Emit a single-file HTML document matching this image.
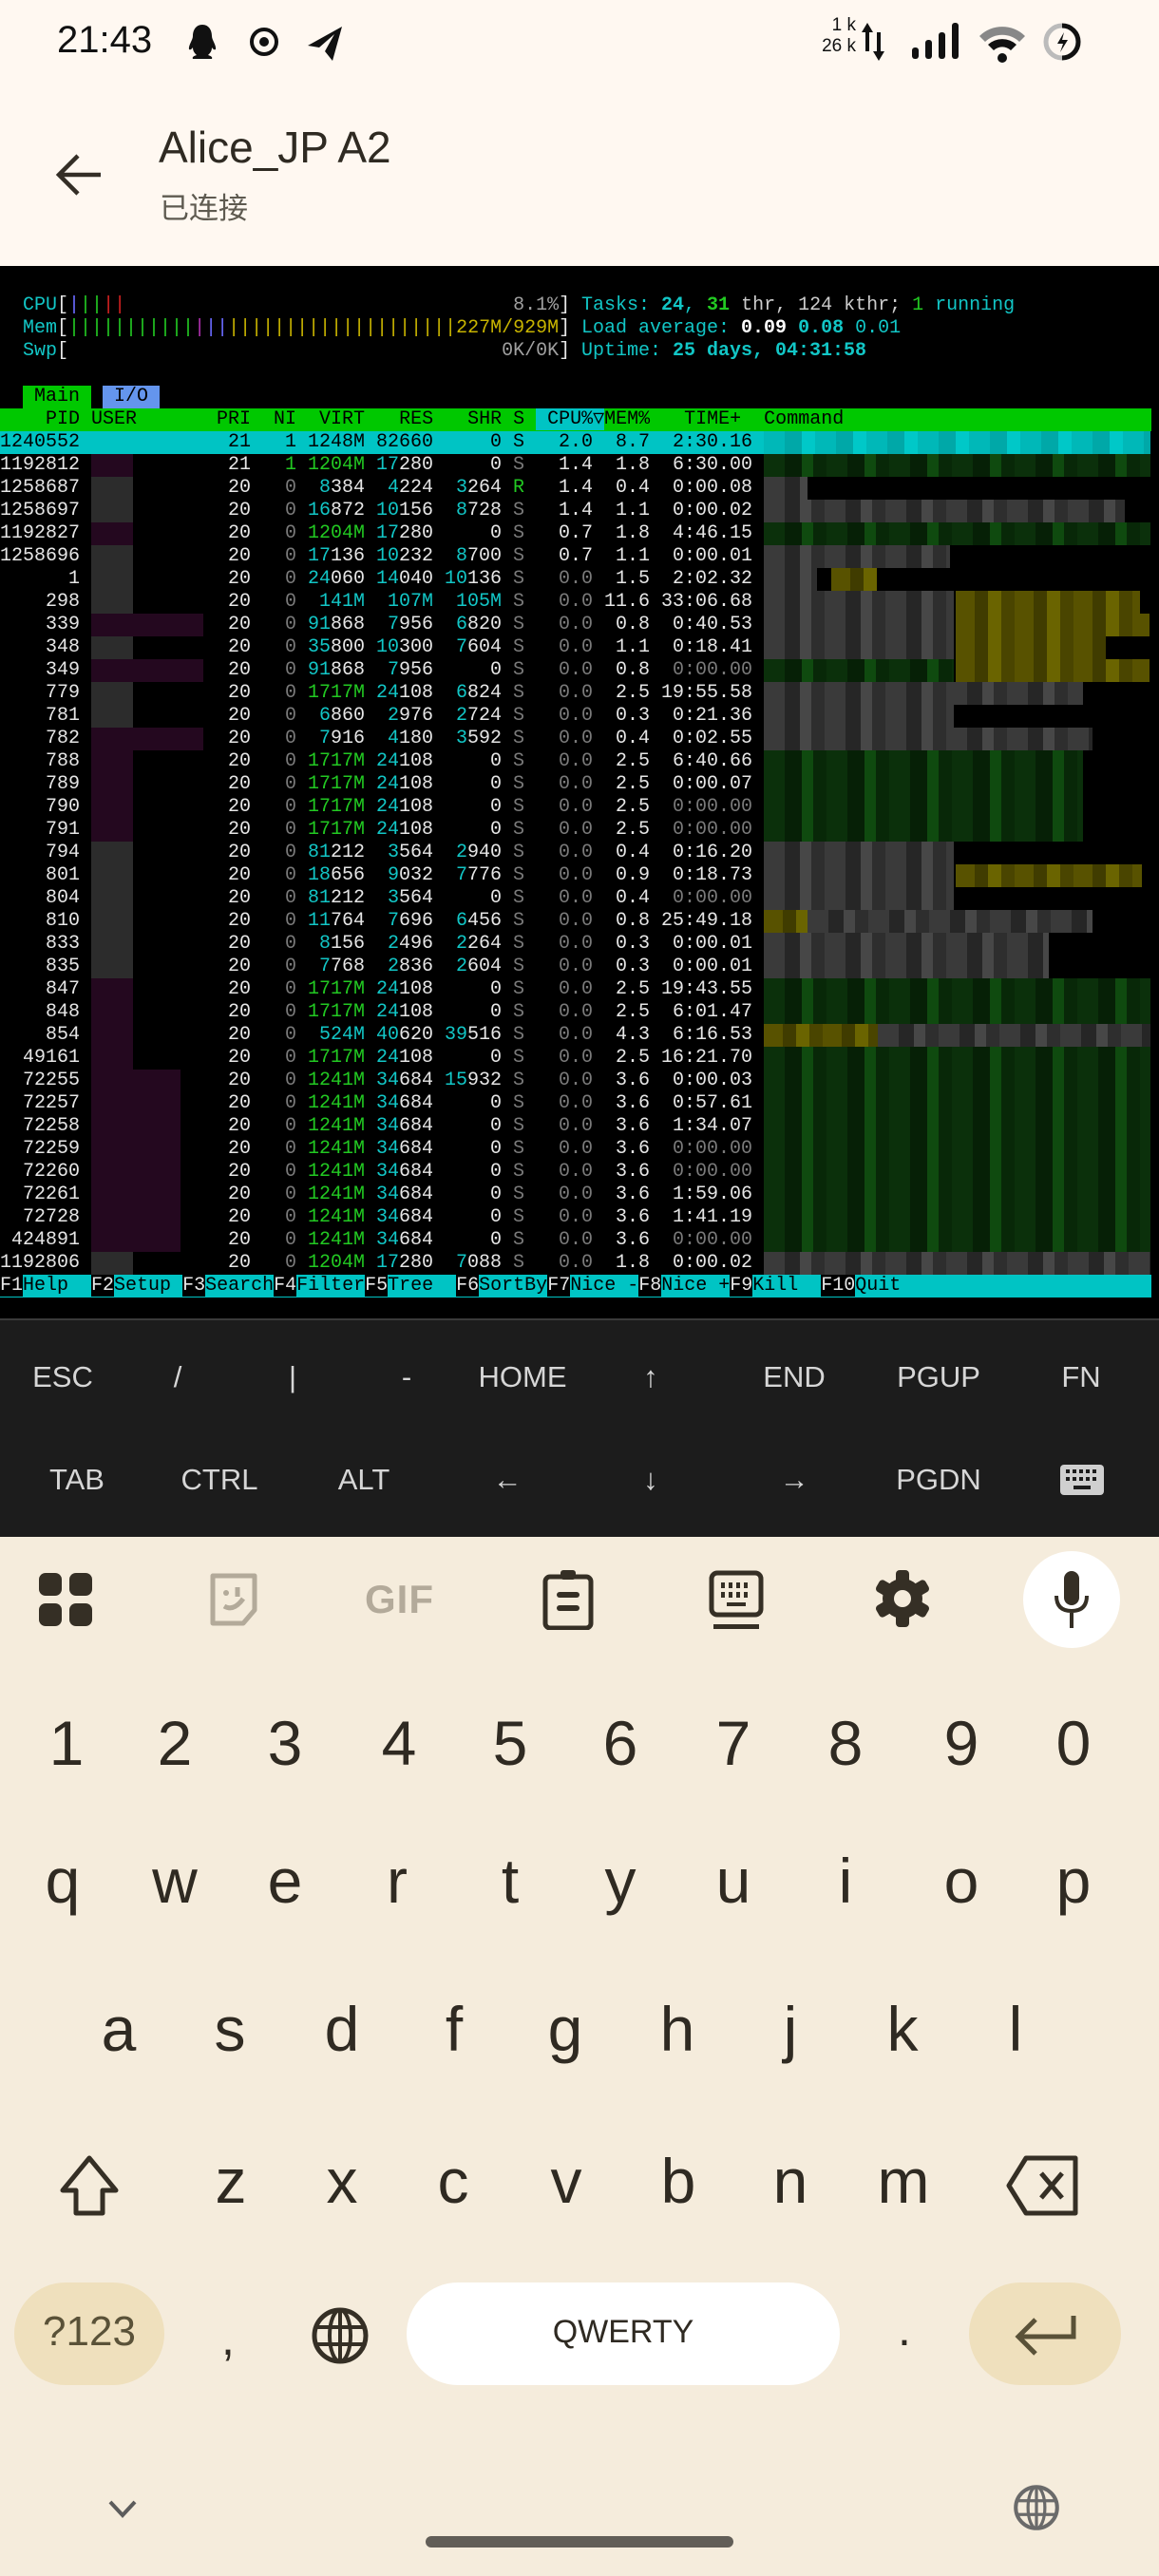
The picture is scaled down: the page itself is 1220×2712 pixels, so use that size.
<!DOCTYPE html>
<html><head><meta charset="utf-8">
<style>
*{margin:0;padding:0;box-sizing:border-box}
body{width:1220px;height:2712px;position:relative;overflow:hidden;background:#fff8f1;font-family:"Liberation Sans","Noto Sans CJK SC",sans-serif}
.abs{position:absolute}
#term{position:absolute;left:0;top:280px;width:1220px;height:1108px;background:#000}
.mono{font-family:"Liberation Mono","DejaVu Sans Mono",monospace;font-size:20px;line-height:24px;white-space:pre;color:#e6e6e6}
.r{position:absolute;left:0;width:1220px;height:24px}
.r i{font-style:normal;position:absolute;top:0;text-align:right}
.p{left:0;width:84px}.pr{left:216px;width:48px}.n{left:264px;width:48px}.v{left:312px;width:72px}.rs{left:384px;width:72px}.sh{left:456px;width:72px}.st{left:528px;width:24px}.cp{left:564px;width:60px}.m{left:624px;width:60px}.t{left:684px;width:108px}
em{font-style:normal;color:#12c6c6}
s{text-decoration:none;color:#7a7a7a}
b{font-weight:normal;color:#22c922}
.hl{background:#00c4c4;color:#000}
.hl em,.hl s,.hl b{color:#000}
.blk{position:absolute;height:24px}
.gy{background:repeating-linear-gradient(90deg,#3a3a3a 0 22px,#262626 22px 38px,#474747 38px 50px,#2e2e2e 50px 64px)}
.gr{background:repeating-linear-gradient(90deg,#0b300b 0 22px,#062006 22px 40px,#0f4a0f 40px 52px,#082808 52px 66px)}
.yl{background:repeating-linear-gradient(90deg,#585200 0 20px,#403c00 20px 34px,#6a6400 34px 48px,#4a4500 48px 62px)}
.cy{background:repeating-linear-gradient(90deg,#00b8b8 0 22px,#00a8a8 22px 40px,#00c8c8 40px 54px)}
.pu{background:#24081f}
.ug{background:#2c2c2c}
.ek{position:absolute;color:#d6d6d6;font-size:31px;transform:translate(-50%,-50%);white-space:nowrap}
.kb{position:absolute;color:#2f2a22;font-size:66px;transform:translate(-50%,-50%);font-weight:300}
</style></head><body>

<!-- status bar -->
<div class="abs" style="left:60px;top:20px;font-size:40px;color:#111">21:43</div>
<svg class="abs" style="left:196px;top:24px" width="34" height="40" viewBox="0 0 34 40"><path d="M17 2c-7 0-10 6-10 12 0 4-5 10-4 14 2 1 3-1 4-2 0 4 2 6 4 8-3 1-5 2-4 4h20c1-2-1-3-4-4 2-2 4-4 4-8 1 1 2 3 4 2 1-4-4-10-4-14 0-6-3-12-10-12z" fill="#111"/></svg>
<svg class="abs" style="left:260px;top:26px" width="36" height="36" viewBox="0 0 36 36"><circle cx="18" cy="18" r="13" fill="none" stroke="#111" stroke-width="4"/><circle cx="18" cy="18" r="5" fill="#111"/></svg>
<svg class="abs" style="left:322px;top:26px" width="42" height="40" viewBox="0 0 42 40"><path d="M2 22L38 2 28 38 20 28 30 10 14 24z" fill="#111"/></svg>
<div class="abs" style="left:857px;top:16px;font-size:19px;color:#111;line-height:22px;text-align:right;width:44px">1 k<br>26 k</div>
<svg class="abs" style="left:905px;top:22px" width="28" height="44" viewBox="0 0 28 44"><path d="M8 2L2 12h4v20h4V12h4z M20 42l6-10h-4V12h-4v20h-4z" fill="#111"/></svg>
<svg class="abs" style="left:958px;top:22px" width="56" height="42" viewBox="0 0 56 42"><rect x="2" y="28" width="7" height="12" rx="3" fill="#111"/><rect x="16" y="20" width="7" height="20" rx="3" fill="#111"/><rect x="30" y="12" width="7" height="28" rx="3" fill="#111"/><rect x="44" y="2" width="7" height="38" rx="3" fill="#111"/></svg>
<svg class="abs" style="left:1028px;top:22px" width="54" height="44" viewBox="0 0 54 44"><path d="M3 16A34 34 0 0 1 51 16L45 22A26 26 0 0 0 9 22z" fill="#888"/><path d="M12 25A22 22 0 0 1 42 25L36 31A13 13 0 0 0 18 31z" fill="#111"/><circle cx="27" cy="39" r="5" fill="#111"/></svg>
<svg class="abs" style="left:1096px;top:22px" width="44" height="44" viewBox="0 0 44 44"><circle cx="22" cy="22" r="17" fill="none" stroke="#bbb" stroke-width="5"/><path d="M22 5A17 17 0 0 1 22 39" fill="none" stroke="#111" stroke-width="5"/><path d="M24 12l-7 12h6l-3 9 8-13h-6z" fill="#111"/></svg>

<!-- app bar -->
<svg class="abs" style="left:56px;top:160px" width="54" height="48" viewBox="0 0 54 48"><path d="M26 4L6 24l20 20M6 24h44" fill="none" stroke="#342e26" stroke-width="4.5"/></svg>
<div class="abs" style="left:167px;top:128px;font-size:46px;color:#2f2a22">Alice_JP A2</div>
<div class="abs" style="left:168px;top:194px;font-size:31px;color:#5e5a50">已连接</div>

<!-- terminal -->
<div id="term" class="mono">
<div class="r" style="top:30px;left:24px"><span style="color:#12c6c6">CPU</span>[<span style="color:#6a6aff">|</span><b>||</b><span style="color:#d02020">||</span>                                  <s style="color:#a0a0a0">8.1%</s>]</div>
<div class="r" style="top:54px;left:24px"><span style="color:#12c6c6">Mem</span>[<b>|||||||||||</b><span style="color:#b030b0">|</span><span style="color:#6a6aff">||</span><span style="color:#c8b400">||||||||||||||||||||227M/929M</span>]</div>
<div class="r" style="top:78px;left:24px"><span style="color:#12c6c6">Swp</span>[                                      <s style="color:#a0a0a0">0K/0K</s>]</div>
<div class="r" style="top:30px;left:612px"><span style="color:#12c6c6">Tasks: <span style="font-weight:bold">24</span>, </span><b style="font-weight:bold">31</b><span style="color:#ccc"> thr, 124 kthr; </span><b>1</b><span style="color:#12c6c6"> running</span></div>
<div class="r" style="top:54px;left:612px"><span style="color:#12c6c6">Load average: </span><span style="font-weight:bold;color:#fff">0.09</span> <span style="font-weight:bold;color:#12c6c6">0.08</span> <span style="color:#12c6c6">0.01</span></div>
<div class="r" style="top:78px;left:612px"><span style="color:#12c6c6">Uptime: <span style="font-weight:bold">25 days, 04:31:58</span></span></div>
<div class="r" style="top:126px;left:24px;width:72px;background:#00c800;color:#000;padding-left:12px">Main</div>
<div class="r" style="top:126px;left:108px;width:60px;background:#6495ed;color:#000;padding-left:12px">I/O</div>
<div class="r" style="top:150px;width:1212px;background:#00c800;color:#000">    PID USER       PRI  NI  VIRT   RES   SHR S <span style="background:#00c4c4"> CPU%▽</span>MEM%   TIME+  Command</div>

<!-- user/command blocks -->
<div class="blk cy" style="top:174px;left:96px;width:130px;background:#00b4b4"></div><div class="blk cy" style="top:174px;left:804px;width:407px"></div>
<div class="blk pu" style="top:198px;left:96px;width:44px"></div><div class="blk gr" style="top:198px;left:804px;width:407px"></div>
<div class="blk ug" style="top:222px;left:96px;width:44px"></div><div class="blk gy" style="top:222px;left:804px;width:46px"></div>
<div class="blk ug" style="top:246px;left:96px;width:44px"></div><div class="blk gy" style="top:246px;left:804px;width:380px"></div>
<div class="blk pu" style="top:270px;left:96px;width:44px"></div><div class="blk gr" style="top:270px;left:804px;width:407px"></div>
<div class="blk ug" style="top:294px;left:96px;width:44px"></div><div class="blk gy" style="top:294px;left:804px;width:196px"></div>
<div class="blk ug" style="top:318px;left:96px;width:44px"></div><div class="blk gy" style="top:318px;left:804px;width:56px"></div><div class="blk yl" style="top:318px;left:875px;width:48px"></div>
<div class="blk ug" style="top:342px;left:96px;width:44px"></div><div class="blk gy" style="top:342px;left:804px;width:200px"></div><div class="blk yl" style="top:342px;left:1006px;width:194px"></div>
<div class="blk pu" style="top:366px;left:96px;width:118px"></div><div class="blk gy" style="top:366px;left:804px;width:200px"></div><div class="blk yl" style="top:366px;left:1006px;width:204px"></div>
<div class="blk ug" style="top:390px;left:96px;width:44px"></div><div class="blk gy" style="top:390px;left:804px;width:200px"></div><div class="blk yl" style="top:390px;left:1006px;width:158px"></div>
<div class="blk pu" style="top:414px;left:96px;width:118px"></div><div class="blk gr" style="top:414px;left:804px;width:200px"></div><div class="blk yl" style="top:414px;left:1006px;width:204px"></div>
<div class="blk ug" style="top:438px;left:96px;width:44px"></div><div class="blk gy" style="top:438px;left:804px;width:336px"></div>
<div class="blk ug" style="top:462px;left:96px;width:44px"></div><div class="blk gy" style="top:462px;left:804px;width:200px"></div>
<div class="blk pu" style="top:486px;left:96px;width:118px"></div><div class="blk gy" style="top:486px;left:804px;width:346px"></div>
<div class="blk pu" style="top:510px;left:96px;width:44px;height:96px"></div><div class="blk gr" style="top:510px;left:804px;width:336px;height:96px"></div>
<div class="blk ug" style="top:606px;left:96px;width:44px"></div><div class="blk gy" style="top:606px;left:804px;width:200px"></div>
<div class="blk ug" style="top:630px;left:96px;width:44px"></div><div class="blk gy" style="top:630px;left:804px;width:200px"></div><div class="blk yl" style="top:630px;left:1006px;width:196px"></div>
<div class="blk ug" style="top:654px;left:96px;width:44px"></div><div class="blk gy" style="top:654px;left:804px;width:200px"></div>
<div class="blk ug" style="top:678px;left:96px;width:44px"></div><div class="blk yl" style="top:678px;left:804px;width:46px"></div><div class="blk gy" style="top:678px;left:850px;width:300px"></div>
<div class="blk ug" style="top:702px;left:96px;width:44px;height:48px"></div><div class="blk gy" style="top:702px;left:804px;width:300px;height:48px"></div>
<div class="blk pu" style="top:750px;left:96px;width:44px;height:96px"></div><div class="blk gr" style="top:750px;left:804px;width:407px;height:48px"></div>
<div class="blk yl" style="top:798px;left:804px;width:120px"></div><div class="blk gy" style="top:798px;left:924px;width:287px"></div>
<div class="blk gr" style="top:822px;left:804px;width:407px"></div>
<div class="blk pu" style="top:846px;left:96px;width:94px;height:192px"></div><div class="blk gr" style="top:846px;left:804px;width:407px;height:192px"></div>
<div class="blk ug" style="top:1038px;left:96px;width:44px"></div><div class="blk gy" style="top:1038px;left:804px;width:407px"></div>

<!-- process rows -->
<div class="r hl" style="top:174px;width:804px"><i class="p">1240552</i><i class="pr">21</i><i class="n">1</i><i class="v">1248M</i><i class="rs">82660</i><i class="sh">0</i><i class="st">S</i><i class="cp">2.0</i><i class="m">8.7</i><i class="t">2:30.16</i></div>
<div class="r" style="top:198px"><i class="p">1192812</i><i class="pr">21</i><i class="n"><b>1</b></i><i class="v"><b>1204M</b></i><i class="rs"><em>17</em>280</i><i class="sh">0</i><i class="st"><s>S</s></i><i class="cp">1.4</i><i class="m">1.8</i><i class="t">6:30.00</i></div>
<div class="r" style="top:222px"><i class="p">1258687</i><i class="pr">20</i><i class="n"><s>0</s></i><i class="v"><em>8</em>384</i><i class="rs"><em>4</em>224</i><i class="sh"><em>3</em>264</i><i class="st"><b>R</b></i><i class="cp">1.4</i><i class="m">0.4</i><i class="t">0:00.08</i></div>
<div class="r" style="top:246px"><i class="p">1258697</i><i class="pr">20</i><i class="n"><s>0</s></i><i class="v"><em>16</em>872</i><i class="rs"><em>10</em>156</i><i class="sh"><em>8</em>728</i><i class="st"><s>S</s></i><i class="cp">1.4</i><i class="m">1.1</i><i class="t">0:00.02</i></div>
<div class="r" style="top:270px"><i class="p">1192827</i><i class="pr">20</i><i class="n"><s>0</s></i><i class="v"><b>1204M</b></i><i class="rs"><em>17</em>280</i><i class="sh">0</i><i class="st"><s>S</s></i><i class="cp">0.7</i><i class="m">1.8</i><i class="t">4:46.15</i></div>
<div class="r" style="top:294px"><i class="p">1258696</i><i class="pr">20</i><i class="n"><s>0</s></i><i class="v"><em>17</em>136</i><i class="rs"><em>10</em>232</i><i class="sh"><em>8</em>700</i><i class="st"><s>S</s></i><i class="cp">0.7</i><i class="m">1.1</i><i class="t">0:00.01</i></div>
<div class="r" style="top:318px"><i class="p">1</i><i class="pr">20</i><i class="n"><s>0</s></i><i class="v"><em>24</em>060</i><i class="rs"><em>14</em>040</i><i class="sh"><em>10</em>136</i><i class="st"><s>S</s></i><i class="cp"><s>0.0</s></i><i class="m">1.5</i><i class="t">2:02.32</i></div>
<div class="r" style="top:342px"><i class="p">298</i><i class="pr">20</i><i class="n"><s>0</s></i><i class="v"><em>141M</em></i><i class="rs"><em>107M</em></i><i class="sh"><em>105M</em></i><i class="st"><s>S</s></i><i class="cp"><s>0.0</s></i><i class="m">11.6</i><i class="t">33:06.68</i></div>
<div class="r" style="top:366px"><i class="p">339</i><i class="pr">20</i><i class="n"><s>0</s></i><i class="v"><em>91</em>868</i><i class="rs"><em>7</em>956</i><i class="sh"><em>6</em>820</i><i class="st"><s>S</s></i><i class="cp"><s>0.0</s></i><i class="m">0.8</i><i class="t">0:40.53</i></div>
<div class="r" style="top:390px"><i class="p">348</i><i class="pr">20</i><i class="n"><s>0</s></i><i class="v"><em>35</em>800</i><i class="rs"><em>10</em>300</i><i class="sh"><em>7</em>604</i><i class="st"><s>S</s></i><i class="cp"><s>0.0</s></i><i class="m">1.1</i><i class="t">0:18.41</i></div>
<div class="r" style="top:414px"><i class="p">349</i><i class="pr">20</i><i class="n"><s>0</s></i><i class="v"><em>91</em>868</i><i class="rs"><em>7</em>956</i><i class="sh">0</i><i class="st"><s>S</s></i><i class="cp"><s>0.0</s></i><i class="m">0.8</i><i class="t"><s>0:00.00</s></i></div>
<div class="r" style="top:438px"><i class="p">779</i><i class="pr">20</i><i class="n"><s>0</s></i><i class="v"><b>1717M</b></i><i class="rs"><em>24</em>108</i><i class="sh"><em>6</em>824</i><i class="st"><s>S</s></i><i class="cp"><s>0.0</s></i><i class="m">2.5</i><i class="t">19:55.58</i></div>
<div class="r" style="top:462px"><i class="p">781</i><i class="pr">20</i><i class="n"><s>0</s></i><i class="v"><em>6</em>860</i><i class="rs"><em>2</em>976</i><i class="sh"><em>2</em>724</i><i class="st"><s>S</s></i><i class="cp"><s>0.0</s></i><i class="m">0.3</i><i class="t">0:21.36</i></div>
<div class="r" style="top:486px"><i class="p">782</i><i class="pr">20</i><i class="n"><s>0</s></i><i class="v"><em>7</em>916</i><i class="rs"><em>4</em>180</i><i class="sh"><em>3</em>592</i><i class="st"><s>S</s></i><i class="cp"><s>0.0</s></i><i class="m">0.4</i><i class="t">0:02.55</i></div>
<div class="r" style="top:510px"><i class="p">788</i><i class="pr">20</i><i class="n"><s>0</s></i><i class="v"><b>1717M</b></i><i class="rs"><em>24</em>108</i><i class="sh">0</i><i class="st"><s>S</s></i><i class="cp"><s>0.0</s></i><i class="m">2.5</i><i class="t">6:40.66</i></div>
<div class="r" style="top:534px"><i class="p">789</i><i class="pr">20</i><i class="n"><s>0</s></i><i class="v"><b>1717M</b></i><i class="rs"><em>24</em>108</i><i class="sh">0</i><i class="st"><s>S</s></i><i class="cp"><s>0.0</s></i><i class="m">2.5</i><i class="t">0:00.07</i></div>
<div class="r" style="top:558px"><i class="p">790</i><i class="pr">20</i><i class="n"><s>0</s></i><i class="v"><b>1717M</b></i><i class="rs"><em>24</em>108</i><i class="sh">0</i><i class="st"><s>S</s></i><i class="cp"><s>0.0</s></i><i class="m">2.5</i><i class="t"><s>0:00.00</s></i></div>
<div class="r" style="top:582px"><i class="p">791</i><i class="pr">20</i><i class="n"><s>0</s></i><i class="v"><b>1717M</b></i><i class="rs"><em>24</em>108</i><i class="sh">0</i><i class="st"><s>S</s></i><i class="cp"><s>0.0</s></i><i class="m">2.5</i><i class="t"><s>0:00.00</s></i></div>
<div class="r" style="top:606px"><i class="p">794</i><i class="pr">20</i><i class="n"><s>0</s></i><i class="v"><em>81</em>212</i><i class="rs"><em>3</em>564</i><i class="sh"><em>2</em>940</i><i class="st"><s>S</s></i><i class="cp"><s>0.0</s></i><i class="m">0.4</i><i class="t">0:16.20</i></div>
<div class="r" style="top:630px"><i class="p">801</i><i class="pr">20</i><i class="n"><s>0</s></i><i class="v"><em>18</em>656</i><i class="rs"><em>9</em>032</i><i class="sh"><em>7</em>776</i><i class="st"><s>S</s></i><i class="cp"><s>0.0</s></i><i class="m">0.9</i><i class="t">0:18.73</i></div>
<div class="r" style="top:654px"><i class="p">804</i><i class="pr">20</i><i class="n"><s>0</s></i><i class="v"><em>81</em>212</i><i class="rs"><em>3</em>564</i><i class="sh">0</i><i class="st"><s>S</s></i><i class="cp"><s>0.0</s></i><i class="m">0.4</i><i class="t"><s>0:00.00</s></i></div>
<div class="r" style="top:678px"><i class="p">810</i><i class="pr">20</i><i class="n"><s>0</s></i><i class="v"><em>11</em>764</i><i class="rs"><em>7</em>696</i><i class="sh"><em>6</em>456</i><i class="st"><s>S</s></i><i class="cp"><s>0.0</s></i><i class="m">0.8</i><i class="t">25:49.18</i></div>
<div class="r" style="top:702px"><i class="p">833</i><i class="pr">20</i><i class="n"><s>0</s></i><i class="v"><em>8</em>156</i><i class="rs"><em>2</em>496</i><i class="sh"><em>2</em>264</i><i class="st"><s>S</s></i><i class="cp"><s>0.0</s></i><i class="m">0.3</i><i class="t">0:00.01</i></div>
<div class="r" style="top:726px"><i class="p">835</i><i class="pr">20</i><i class="n"><s>0</s></i><i class="v"><em>7</em>768</i><i class="rs"><em>2</em>836</i><i class="sh"><em>2</em>604</i><i class="st"><s>S</s></i><i class="cp"><s>0.0</s></i><i class="m">0.3</i><i class="t">0:00.01</i></div>
<div class="r" style="top:750px"><i class="p">847</i><i class="pr">20</i><i class="n"><s>0</s></i><i class="v"><b>1717M</b></i><i class="rs"><em>24</em>108</i><i class="sh">0</i><i class="st"><s>S</s></i><i class="cp"><s>0.0</s></i><i class="m">2.5</i><i class="t">19:43.55</i></div>
<div class="r" style="top:774px"><i class="p">848</i><i class="pr">20</i><i class="n"><s>0</s></i><i class="v"><b>1717M</b></i><i class="rs"><em>24</em>108</i><i class="sh">0</i><i class="st"><s>S</s></i><i class="cp"><s>0.0</s></i><i class="m">2.5</i><i class="t">6:01.47</i></div>
<div class="r" style="top:798px"><i class="p">854</i><i class="pr">20</i><i class="n"><s>0</s></i><i class="v"><em>524M</em></i><i class="rs"><em>40</em>620</i><i class="sh"><em>39</em>516</i><i class="st"><s>S</s></i><i class="cp"><s>0.0</s></i><i class="m">4.3</i><i class="t">6:16.53</i></div>
<div class="r" style="top:822px"><i class="p">49161</i><i class="pr">20</i><i class="n"><s>0</s></i><i class="v"><b>1717M</b></i><i class="rs"><em>24</em>108</i><i class="sh">0</i><i class="st"><s>S</s></i><i class="cp"><s>0.0</s></i><i class="m">2.5</i><i class="t">16:21.70</i></div>
<div class="r" style="top:846px"><i class="p">72255</i><i class="pr">20</i><i class="n"><s>0</s></i><i class="v"><b>1241M</b></i><i class="rs"><em>34</em>684</i><i class="sh"><em>15</em>932</i><i class="st"><s>S</s></i><i class="cp"><s>0.0</s></i><i class="m">3.6</i><i class="t">0:00.03</i></div>
<div class="r" style="top:870px"><i class="p">72257</i><i class="pr">20</i><i class="n"><s>0</s></i><i class="v"><b>1241M</b></i><i class="rs"><em>34</em>684</i><i class="sh">0</i><i class="st"><s>S</s></i><i class="cp"><s>0.0</s></i><i class="m">3.6</i><i class="t">0:57.61</i></div>
<div class="r" style="top:894px"><i class="p">72258</i><i class="pr">20</i><i class="n"><s>0</s></i><i class="v"><b>1241M</b></i><i class="rs"><em>34</em>684</i><i class="sh">0</i><i class="st"><s>S</s></i><i class="cp"><s>0.0</s></i><i class="m">3.6</i><i class="t">1:34.07</i></div>
<div class="r" style="top:918px"><i class="p">72259</i><i class="pr">20</i><i class="n"><s>0</s></i><i class="v"><b>1241M</b></i><i class="rs"><em>34</em>684</i><i class="sh">0</i><i class="st"><s>S</s></i><i class="cp"><s>0.0</s></i><i class="m">3.6</i><i class="t"><s>0:00.00</s></i></div>
<div class="r" style="top:942px"><i class="p">72260</i><i class="pr">20</i><i class="n"><s>0</s></i><i class="v"><b>1241M</b></i><i class="rs"><em>34</em>684</i><i class="sh">0</i><i class="st"><s>S</s></i><i class="cp"><s>0.0</s></i><i class="m">3.6</i><i class="t"><s>0:00.00</s></i></div>
<div class="r" style="top:966px"><i class="p">72261</i><i class="pr">20</i><i class="n"><s>0</s></i><i class="v"><b>1241M</b></i><i class="rs"><em>34</em>684</i><i class="sh">0</i><i class="st"><s>S</s></i><i class="cp"><s>0.0</s></i><i class="m">3.6</i><i class="t">1:59.06</i></div>
<div class="r" style="top:990px"><i class="p">72728</i><i class="pr">20</i><i class="n"><s>0</s></i><i class="v"><b>1241M</b></i><i class="rs"><em>34</em>684</i><i class="sh">0</i><i class="st"><s>S</s></i><i class="cp"><s>0.0</s></i><i class="m">3.6</i><i class="t">1:41.19</i></div>
<div class="r" style="top:1014px"><i class="p">424891</i><i class="pr">20</i><i class="n"><s>0</s></i><i class="v"><b>1241M</b></i><i class="rs"><em>34</em>684</i><i class="sh">0</i><i class="st"><s>S</s></i><i class="cp"><s>0.0</s></i><i class="m">3.6</i><i class="t"><s>0:00.00</s></i></div>
<div class="r" style="top:1038px"><i class="p">1192806</i><i class="pr">20</i><i class="n"><s>0</s></i><i class="v"><b>1204M</b></i><i class="rs"><em>17</em>280</i><i class="sh"><em>7</em>088</i><i class="st"><s>S</s></i><i class="cp"><s>0.0</s></i><i class="m">1.8</i><i class="t">0:00.02</i></div>

<!-- F-key bar -->
<div class="r" style="top:1062px;width:1212px;background:#00c4c4"></div>
<div class="r" style="top:1062px;color:#000"><span style="background:#000;color:#e6e6e6">F1</span>Help  <span style="background:#000;color:#e6e6e6">F2</span>Setup <span style="background:#000;color:#e6e6e6">F3</span>Search<span style="background:#000;color:#e6e6e6">F4</span>Filter<span style="background:#000;color:#e6e6e6">F5</span>Tree  <span style="background:#000;color:#e6e6e6">F6</span>SortBy<span style="background:#000;color:#e6e6e6">F7</span>Nice -<span style="background:#000;color:#e6e6e6">F8</span>Nice +<span style="background:#000;color:#e6e6e6">F9</span>Kill  <span style="background:#000;color:#e6e6e6">F10</span>Quit</div>
</div>

<!-- extra keys -->
<div class="abs" style="left:0;top:1388px;width:1220px;height:230px;background:#1c1c1c;border-top:2px solid #3a3a3a"></div>
<div class="ek" style="left:66px;top:1450px">ESC</div>
<div class="ek" style="left:187px;top:1450px">/</div>
<div class="ek" style="left:308px;top:1450px">|</div>
<div class="ek" style="left:428px;top:1450px">-</div>
<div class="ek" style="left:550px;top:1450px">HOME</div>
<div class="ek" style="left:685px;top:1450px">↑</div>
<div class="ek" style="left:836px;top:1450px">END</div>
<div class="ek" style="left:988px;top:1450px">PGUP</div>
<div class="ek" style="left:1138px;top:1450px">FN</div>
<div class="ek" style="left:81px;top:1558px">TAB</div>
<div class="ek" style="left:231px;top:1558px">CTRL</div>
<div class="ek" style="left:383px;top:1558px">ALT</div>
<div class="ek" style="left:534px;top:1558px">←</div>
<div class="ek" style="left:685px;top:1558px">↓</div>
<div class="ek" style="left:836px;top:1558px">→</div>
<div class="ek" style="left:988px;top:1558px">PGDN</div>
<svg class="abs" style="left:1116px;top:1542px" width="46" height="32" viewBox="0 0 46 32"><rect x="0" y="0" width="46" height="32" rx="4" fill="#cfcfcf"/><g fill="#1c1c1c"><rect x="6" y="5" width="4" height="4"/><rect x="13" y="5" width="4" height="4"/><rect x="20" y="5" width="4" height="4"/><rect x="27" y="5" width="4" height="4"/><rect x="34" y="5" width="4" height="4"/><rect x="6" y="13" width="4" height="4"/><rect x="13" y="13" width="4" height="4"/><rect x="20" y="13" width="4" height="4"/><rect x="27" y="13" width="4" height="4"/><rect x="34" y="13" width="4" height="4"/><rect x="14" y="22" width="18" height="4"/></g></svg>

<!-- keyboard -->
<div class="abs" style="left:0;top:1618px;width:1220px;height:1094px;background:#f5ecdc"></div>
<svg class="abs" style="left:40px;top:1655px" width="58" height="58" viewBox="0 0 58 58"><g fill="#352f25"><rect x="1" y="1" width="24" height="24" rx="7"/><rect x="33" y="1" width="24" height="24" rx="7"/><rect x="1" y="33" width="24" height="24" rx="7"/><rect x="33" y="33" width="24" height="24" rx="7"/></g></svg>
<svg class="abs" style="left:218px;top:1655px" width="56" height="58" viewBox="0 0 56 58"><path d="M6 4h44v36L38 54H6z" fill="none" stroke="#b3aa9a" stroke-width="5" stroke-linejoin="round"/><circle cx="20" cy="22" r="3" fill="#b3aa9a"/><path d="M32 16v10M18 36q10 6 20-8" fill="none" stroke="#b3aa9a" stroke-width="5"/></svg>
<div class="abs" style="left:384px;top:1660px;font-size:42px;font-weight:bold;color:#b3aa9a;letter-spacing:1px">GIF</div>
<svg class="abs" style="left:570px;top:1650px" width="56" height="66" viewBox="0 0 56 66"><rect x="4" y="10" width="48" height="54" rx="5" fill="none" stroke="#352f25" stroke-width="5"/><rect x="20" y="3" width="16" height="10" rx="3" fill="#352f25"/><rect x="16" y="26" width="24" height="6" rx="3" fill="#352f25"/><rect x="16" y="40" width="24" height="6" rx="3" fill="#352f25"/></svg>
<svg class="abs" style="left:745px;top:1652px" width="60" height="66" viewBox="0 0 60 66"><rect x="4" y="4" width="52" height="44" rx="6" fill="none" stroke="#352f25" stroke-width="5"/><g fill="#352f25"><rect x="14" y="14" width="4" height="6"/><rect x="22" y="14" width="4" height="6"/><rect x="30" y="14" width="4" height="6"/><rect x="38" y="14" width="4" height="6"/><rect x="14" y="24" width="4" height="6"/><rect x="22" y="24" width="4" height="6"/><rect x="30" y="24" width="4" height="6"/><rect x="38" y="24" width="4" height="6"/><rect x="20" y="35" width="20" height="4"/><rect x="6" y="58" width="48" height="5"/></g></svg>
<svg class="abs" style="left:919px;top:1652px" width="62" height="62" viewBox="0 0 62 62"><g fill="#352f25" transform="translate(31 31)"><rect x="-7" y="-30" width="14" height="60" rx="4"/><rect x="-7" y="-30" width="14" height="60" rx="4" transform="rotate(60)"/><rect x="-7" y="-30" width="14" height="60" rx="4" transform="rotate(120)"/><circle r="21"/></g><circle cx="31" cy="31" r="9" fill="#f5ecdc"/></svg>
<div class="abs" style="left:1077px;top:1633px;width:102px;height:102px;border-radius:50%;background:#fff"></div>
<svg class="abs" style="left:1108px;top:1652px" width="40" height="64" viewBox="0 0 40 64"><rect x="12" y="2" width="16" height="36" rx="8" fill="#352f25"/><path d="M4 28q0 16 16 16t16-16M20 44v18" fill="none" stroke="#352f25" stroke-width="4"/></svg>

<div class="kb" style="left:70px;top:1835px">1</div>
<div class="kb" style="left:184px;top:1835px">2</div>
<div class="kb" style="left:300px;top:1835px">3</div>
<div class="kb" style="left:420px;top:1835px">4</div>
<div class="kb" style="left:537px;top:1835px">5</div>
<div class="kb" style="left:653px;top:1835px">6</div>
<div class="kb" style="left:772px;top:1835px">7</div>
<div class="kb" style="left:890px;top:1835px">8</div>
<div class="kb" style="left:1012px;top:1835px">9</div>
<div class="kb" style="left:1130px;top:1835px">0</div>

<div class="kb" style="left:66px;top:1980px">q</div>
<div class="kb" style="left:184px;top:1980px">w</div>
<div class="kb" style="left:300px;top:1980px">e</div>
<div class="kb" style="left:418px;top:1980px">r</div>
<div class="kb" style="left:537px;top:1980px">t</div>
<div class="kb" style="left:653px;top:1980px">y</div>
<div class="kb" style="left:772px;top:1980px">u</div>
<div class="kb" style="left:890px;top:1980px">i</div>
<div class="kb" style="left:1012px;top:1980px">o</div>
<div class="kb" style="left:1130px;top:1980px">p</div>

<div class="kb" style="left:125px;top:2136px">a</div>
<div class="kb" style="left:242px;top:2136px">s</div>
<div class="kb" style="left:360px;top:2136px">d</div>
<div class="kb" style="left:478px;top:2136px">f</div>
<div class="kb" style="left:595px;top:2136px">g</div>
<div class="kb" style="left:713px;top:2136px">h</div>
<div class="kb" style="left:832px;top:2136px">j</div>
<div class="kb" style="left:950px;top:2136px">k</div>
<div class="kb" style="left:1069px;top:2136px">l</div>

<svg class="abs" style="left:60px;top:2268px" width="68" height="66" viewBox="0 0 68 66"><path d="M34 4L6 38h14v24h28V38h14z" fill="none" stroke="#352f25" stroke-width="5" stroke-linejoin="round"/></svg>
<div class="kb" style="left:243px;top:2296px">z</div>
<div class="kb" style="left:360px;top:2296px">x</div>
<div class="kb" style="left:477px;top:2296px">c</div>
<div class="kb" style="left:596px;top:2296px">v</div>
<div class="kb" style="left:714px;top:2296px">b</div>
<div class="kb" style="left:832px;top:2296px">n</div>
<div class="kb" style="left:951px;top:2296px">m</div>
<svg class="abs" style="left:1058px;top:2268px" width="80" height="66" viewBox="0 0 80 66"><path d="M22 4h52v58H22L4 33z" fill="none" stroke="#352f25" stroke-width="5" stroke-linejoin="round"/><path d="M38 20l22 26M60 20L38 46" stroke="#352f25" stroke-width="5"/></svg>

<div class="abs" style="left:15px;top:2403px;width:158px;height:108px;border-radius:54px;background:#efe0bd"></div>
<div class="abs" style="left:15px;top:2430px;width:158px;text-align:center;font-size:44px;color:#5a5238">?123</div>
<div class="kb" style="left:240px;top:2462px;font-size:50px">,</div>
<svg class="abs" style="left:327px;top:2428px" width="62" height="62" viewBox="0 0 62 62"><circle cx="31" cy="31" r="27" fill="none" stroke="#352f25" stroke-width="5"/><ellipse cx="31" cy="31" rx="11" ry="27" fill="none" stroke="#352f25" stroke-width="4"/><path d="M4 22h54M4 40h54M31 4v54" stroke="#352f25" stroke-width="4"/></svg>
<div class="abs" style="left:428px;top:2403px;width:456px;height:108px;border-radius:54px;background:#fff"></div>
<div class="abs" style="left:428px;top:2436px;width:456px;text-align:center;font-size:34px;color:#2f2a22">QWERTY</div>
<div class="kb" style="left:952px;top:2452px;font-size:50px">.</div>
<div class="abs" style="left:1020px;top:2403px;width:160px;height:108px;border-radius:54px;background:#efe0bd"></div>
<svg class="abs" style="left:1066px;top:2434px" width="72" height="50" viewBox="0 0 72 50"><path d="M64 4v22H8M24 8L6 26l18 18" fill="none" stroke="#5a5238" stroke-width="5"/></svg>

<svg class="abs" style="left:112px;top:2630px" width="34" height="22" viewBox="0 0 34 22"><path d="M4 4l13 14L30 4" fill="none" stroke="#5c5c5c" stroke-width="4"/></svg>
<svg class="abs" style="left:1066px;top:2615px" width="50" height="50" viewBox="0 0 62 62"><circle cx="31" cy="31" r="27" fill="none" stroke="#6a6a6a" stroke-width="5"/><ellipse cx="31" cy="31" rx="11" ry="27" fill="none" stroke="#6a6a6a" stroke-width="4"/><path d="M4 22h54M4 40h54M31 4v54" stroke="#6a6a6a" stroke-width="4"/></svg>
<div class="abs" style="left:448px;top:2670px;width:324px;height:12px;border-radius:6px;background:#625e57"></div>

</body></html>
